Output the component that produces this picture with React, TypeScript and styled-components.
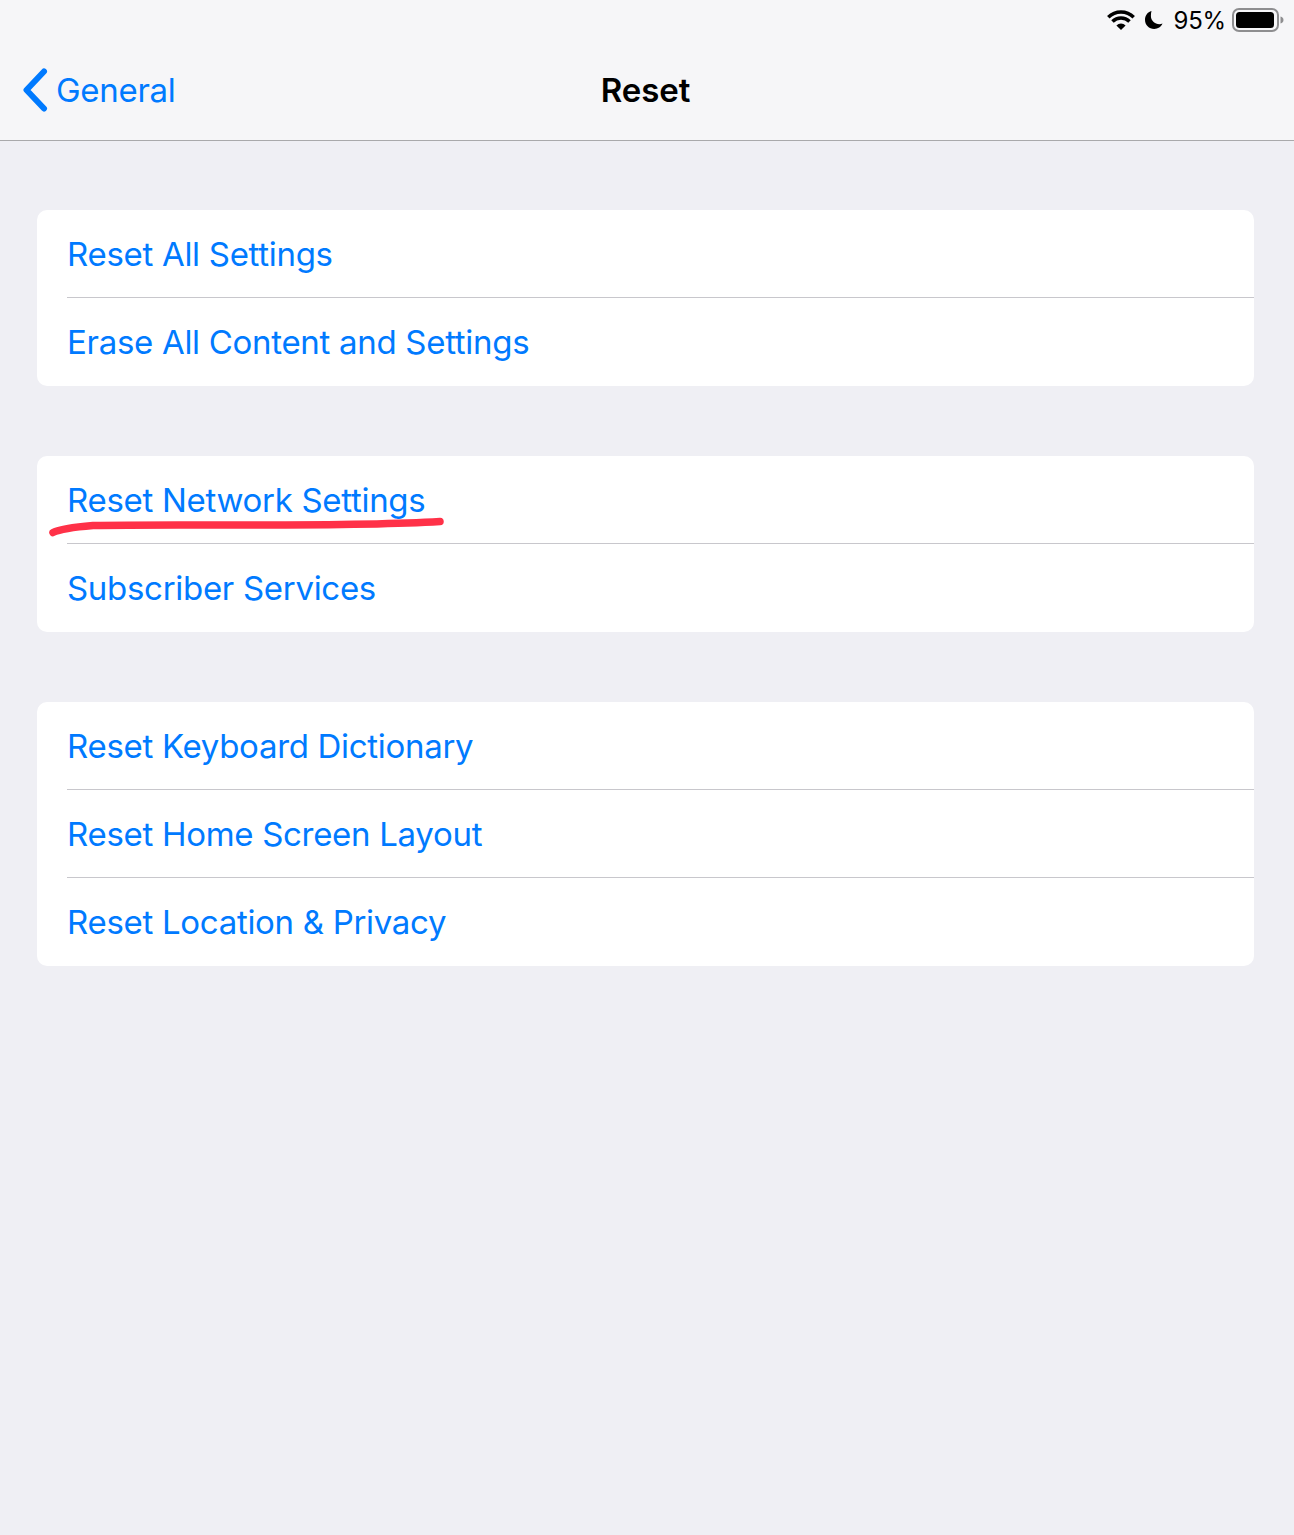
import React from "react";
import styled, { createGlobalStyle } from "styled-components";

const GlobalStyle = createGlobalStyle`
    html, body {
        margin: 0;
        padding: 0;
        background-color: #efeff4;
        font-family: "Inter", "Liberation Sans", sans-serif;
    }
`;

const Page = styled.div`
    width: 1294px;
    height: 1535px;
    background-color: #efeff4;
    overflow: hidden;
`;

const Header = styled.header`
    height: 140px;
    background-color: #f6f6f8;
    border-bottom: 1px solid #a9a9ab;
`;

const StatusBar = styled.div`
    height: 40px;
    display: flex;
    align-items: center;
    justify-content: flex-end;
    padding-right: 10px;
    color: #000;
    font-size: 24px;
    letter-spacing: -0.2px;
`;

const Percent = styled.span`
    margin: 0 6px 0 11px;
`;

const NavBar = styled.nav`
    height: 100px;
    padding-right: 3px;
    display: grid;
    grid-template-columns: 1fr auto 1fr;
    align-items: center;
`;

const BackLink = styled.div`
    display: flex;
    align-items: center;
    gap: 7px;
    padding-left: 22px;
    color: #007aff;
    font-size: 33px;
    letter-spacing: -0.3px;
`;

const Title = styled.div`
    color: #000;
    font-size: 33px;
    font-weight: 600;
    letter-spacing: -0.1px;
`;

const Content = styled.main`
    display: flex;
    flex-direction: column;
    gap: 70px;
    padding: 69px 40px 0 37px;
`;

const Group = styled.section`
    background-color: #fff;
    border-radius: 10px;
    overflow: hidden;
`;

const Row = styled.div`
    height: 88px;
    box-sizing: border-box;
    margin-left: 30px;
    display: flex;
    align-items: center;
    color: #007aff;
    font-size: 33px;
    letter-spacing: -0.3px;
    position: relative;

    &:not(:last-child) {
        border-bottom: 1px solid #c8c7cc;
    }
`;

const Scribble = styled.svg`
    position: absolute;
    left: -20px;
    top: 58px;
`;

const groups = [
    ["Reset All Settings", "Erase All Content and Settings"],
    ["Reset Network Settings", "Subscriber Services"],
    ["Reset Keyboard Dictionary", "Reset Home Screen Layout", "Reset Location & Privacy"],
];

const WifiIcon = () => (
    <svg width="28" height="20" viewBox="0 0 28 20">
        <path d="M1.300 7.300A18 18 0 0 1 26.700 7.300" fill="none" stroke="#000" strokeWidth="3.500" />
        <path d="M5.500 11.500A12 12 0 0 1 22.500 11.500" fill="none" stroke="#000" strokeWidth="3.500" />
        <path d="M14 20L9.400 15.400A6.500 6.500 0 0 1 18.600 15.400Z" fill="#000" />
    </svg>
);

const MoonIcon = () => (
    <svg width="18" height="18" viewBox="1 1 18 18" style={{ marginLeft: 10 }}>
        <path d="M7.500 1C3.600 2 1 5.500 1 9.800 1 15 5 19 10.200 19c3.700 0 6.900-2.100 8.300-5.400-1 .4-2 .6-3.100.6-4.700 0-8.500-3.600-8.500-8.200 0-1.900.2-3.500.6-5z" fill="#000" />
    </svg>
);

const BatteryIcon = () => (
    <svg width="52" height="24" viewBox="0 0 52 24">
        <rect x="1" y="1" width="45" height="22" rx="6" fill="none" stroke="#8e8e90" strokeWidth="2" />
        <rect x="4" y="4" width="38" height="16" rx="3.500" fill="#000" />
        <path d="M48.500 8.500c1.800.4 3 1.800 3 3.500s-1.200 3.100-3 3.500z" fill="#8e8e90" />
    </svg>
);

const BackChevron = () => (
    <svg width="27" height="44" viewBox="0 0 27 44">
        <path d="M22 3.500L4.500 22 22 40.500" fill="none" stroke="#007aff" strokeWidth="6" strokeLinecap="round" strokeLinejoin="round" />
    </svg>
);

// red marker stroke under the network row
const Underline = () => (
    <Scribble width="400" height="26" viewBox="0 0 400 26">
        <path
            d="M6 18.500C14 14.500 28 13 46 11.500 90 10.500 150 11 205 11 275 11 345 10.500 393 7.500"
            fill="none"
            stroke="#ff3148"
            strokeWidth="7.500"
            strokeLinecap="round"
        />
    </Scribble>
);

export default function App() {
    return (
        <Page>
            <GlobalStyle />
            <Header>
                <StatusBar>
                    <WifiIcon />
                    <MoonIcon />
                    <Percent>95%</Percent>
                    <BatteryIcon />
                </StatusBar>
                <NavBar>
                    <BackLink>
                        <BackChevron />
                        General
                    </BackLink>
                    <Title>Reset</Title>
                    <div />
                </NavBar>
            </Header>
            <Content>
                {groups.map((rows) => (
                    <Group key={rows[0]}>
                        {rows.map((label) => (
                            <Row key={label}>
                                {label}
                                {label === "Reset Network Settings" && <Underline />}
                            </Row>
                        ))}
                    </Group>
                ))}
            </Content>
        </Page>
    );
}
